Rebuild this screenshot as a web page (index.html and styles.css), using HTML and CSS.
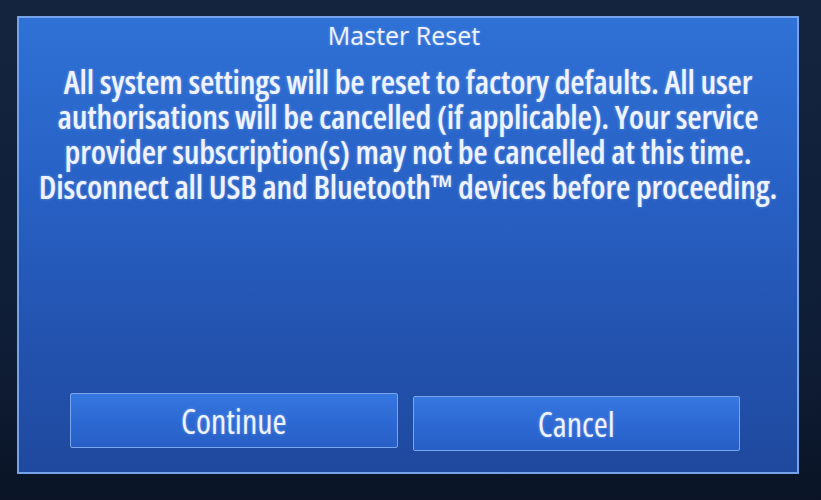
FILE: index.html
```html
<!DOCTYPE html>
<html lang="en">
<head>
    <meta charset="UTF-8">
    <title>Master Reset</title>
    <link rel="stylesheet" href="styles.css">
</head>
<body>
<div class="screen">
    <div class="dialog">
        <h1 class="title">Master Reset</h1>
        <p class="message">All system settings will be reset to factory defaults. All user<br>
            authorisations will be cancelled (if applicable). Your service<br>
            provider subscription(s) may not be cancelled at this time.<br>
            Disconnect all USB and Bluetooth™ devices before proceeding.</p>
        <div class="buttons">
            <a href="javascript:;" class="btn">Continue</a>
            <a href="javascript:;" class="btn btn-cancel">Cancel</a>
        </div>
    </div>
</div>
</body>
</html>
```

FILE: styles.css
```css
*{
    padding: 0;
    margin: 0;
    box-sizing: border-box;
}
body{
    width: 821px;
    height: 500px;
    overflow: hidden;
    background: #0c1729;
    font-family: "Open Sans", "DejaVu Sans Condensed", sans-serif;
    font-stretch: 80%;
    color: #eef3ff;
}
.screen{
    height: 500px;
    padding: 16px 0 0 17px;
    background: linear-gradient(180deg, #14243f 0%, #0f1d36 70%, #0a1426 100%);
}
.dialog{
    width: 782px;
    height: 458px;
    display: flex;
    flex-direction: column;
    align-items: center;
    border: 2px solid #74a3ea;
    background: linear-gradient(180deg, #2f71d6 0%, #2862c6 35%, #2353b0 70%, #1f499e 100%);
    text-shadow: 0 0 3px rgba(180,210,255,.5);
}
.title{
    font-size: 25px;
    font-weight: 500;
    font-stretch: 90%;
    line-height: 32px;
    margin-top: 1px;
    margin-left: -8px;
}
.message{
    margin-top: 13px;
    font-size: 33px;
    font-weight: 600;
    line-height: 35px;
    text-align: center;
    white-space: nowrap;
    letter-spacing: -0.2px;
}
.buttons{
    margin-top: auto;
    margin-bottom: 24px;
    display: flex;
    gap: 15px;
    padding-left: 51px;
    padding-right: 57px;
    width: 100%;
}
.btn{
    flex: 1;
    height: 55px;
    display: flex;
    align-items: center;
    justify-content: center;
    text-decoration: none;
    color: #eef3ff;
    font-size: 34px;
    font-weight: 500;
    border: 1px solid #7aa6ec;
    border-radius: 2px;
    background: linear-gradient(180deg, #3677e0 0%, #2d69d4 50%, #285fc6 100%);
}
.btn-cancel{
    margin-top: 3px;
    margin-bottom: -3px;
}
```
